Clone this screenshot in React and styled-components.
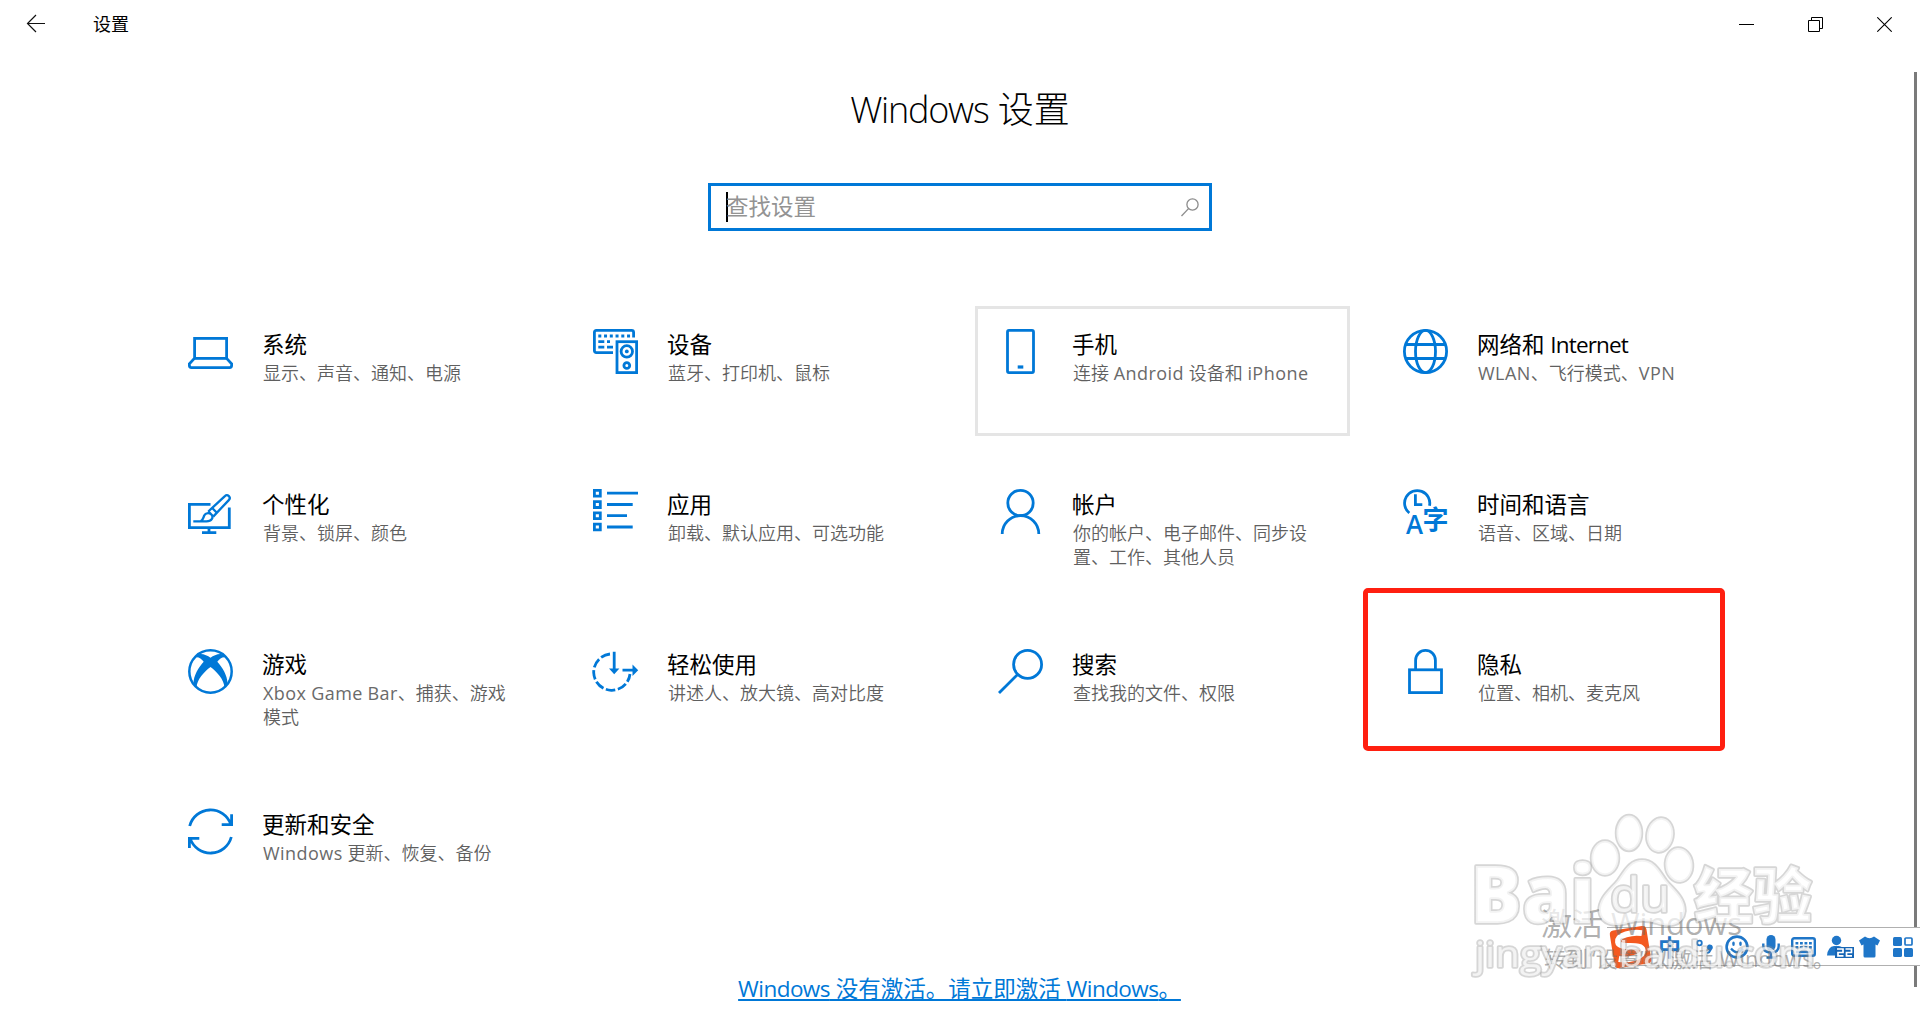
import styled, { createGlobalStyle, css } from 'styled-components';

const latinFont = `'Open Sans', 'Noto Sans'`;
const fontStack = `${latinFont}, 'Noto Sans CJK SC', sans-serif`;
const accent = '#0078d7';
const imeBlue = '#1f76c8';

const IconText = styled.text`
    fill: ${accent};
    stroke: none;
    font-family: ${fontStack};
    font-weight: 600;
`

export default function App() {
    return (
        <>
            <GlobalStyle />
            <Window>
                <TitleBar />
                <Content>
                    <PageTitle><Mixed text='Windows 设置' spacing='-0.034em' /></PageTitle>
                    <SearchBox>
                        <Caret />
                        <Placeholder>查找设置</Placeholder>
                        <SearchIcon />
                    </SearchBox>
                    <Grid>
                        {categories.map(item => <Category key={item.title} {...item} />)}
                    </Grid>
                </Content>
                <ActivateLink href='#'><Mixed text='Windows 没有激活。请立即激活 Windows。' spacing='-0.025em' /></ActivateLink>
                <ScrollBar />
                <ImeBar />
                <ActivateNotice>
                    <h2><Mixed text='激活 Windows' spacing='-0.005em' /></h2>
                    <p><Mixed text='转到“设置”以激活 Windows。' spacing='0' /></p>
                </ActivateNotice>
                <BaiduMark />
            </Window>
        </>
    );
}

// latin words get their own letter spacing, the chinese text keeps its full advance
function Mixed({ text, spacing = '-0.03em' }) {
    return text.split(/([A-Za-z]+)/).map((part, i) => (
        i % 2 ? <Latin key={i} $spacing={spacing}>{part}</Latin> : part
    ));
}

function TitleBar() {
    return (
        <Bar>
            <BackButton type='button'>
                <svg width='20' height='20' viewBox='0 0 20 20' fill='none' stroke='#111' strokeWidth='1.2'>
                    <path d='M19 9.5H1.5M10 1L1.5 9.5L10 18' />
                </svg>
            </BackButton>
            <BarTitle>设置</BarTitle>
            <WindowButton type='button'>
                <svg width='15' height='15' viewBox='0 0 15 15'><path d='M0 7.5H15' stroke='#000' /></svg>
            </WindowButton>
            <WindowButton type='button'>
                <svg width='15' height='15' viewBox='0 0 15 15' fill='none' stroke='#000'>
                    <path d='M0.5 3.5H11.5V14.5H0.5ZM3.5 3.5V0.5H14.5V11.5H11.5' />
                </svg>
            </WindowButton>
            <WindowButton type='button'>
                <svg width='15' height='15' viewBox='0 0 15 15' stroke='#000' strokeWidth='1.1'>
                    <path d='M0.3 0.3L14.7 14.7M14.7 0.3L0.3 14.7' />
                </svg>
            </WindowButton>
        </Bar>
    );
}

function SearchIcon() {
    return (
        <svg width='18' height='19' viewBox='0 0 18 19' fill='none' stroke='#8c8c8c' strokeWidth='1.3'>
            <circle cx='11.5' cy='6.5' r='5.6' />
            <path d='M7.5 10.6L0.5 18' />
        </svg>
    );
}

function Category({ title, text, icon, hovered, marked }) {
    return (
        <Card $hovered={hovered}>
            <CardIcon viewBox='0 0 45 45'>{icon}</CardIcon>
            <CardText>
                <CardTitle><Mixed text={title} spacing='-0.038em' /></CardTitle>
                <CardInfo><Mixed text={text} spacing='0.025em' /></CardInfo>
            </CardText>
            {marked && <RedFrame />}
        </Card>
    );
}

const categories = [
    {
        title: '系统',
        text: '显示、声音、通知、电源',
        icon: (
            <>
                <rect x='6.6' y='9.4' width='32' height='20' />
                <path d='M6.4 29.4L1.4 34.8V36.6Q1.4 38.6 3.4 38.6H41.6Q43.6 38.6 43.6 36.6V34.8L38.6 29.4' />
            </>
        )
    },
    {
        title: '设备',
        text: '蓝牙、打印机、鼠标',
        icon: (
            <>
                <path d='M20 23.6H3.4Q1.4 23.6 1.4 21.6V3.4Q1.4 1.4 3.4 1.4H38.6Q40.6 1.4 40.6 3.4V8.5' />
                <path d='M5.3 7H37.5' strokeDasharray='3 2.75' />
                <path d='M5.3 12.7H11.3M14 12.7H17M5.3 18.2H11.3M14 18.2H20' />
                <rect x='24' y='12.7' width='19.6' height='30.9' />
                <circle cx='33.8' cy='22.4' r='5.7' />
                <circle cx='33.8' cy='22.4' r='1.9' fill={accent} stroke='none' />
                <circle cx='33.8' cy='36.5' r='2.9' />
            </>
        )
    },
    {
        title: '手机',
        text: '连接 Android 设备和 iPhone',
        hovered: true,
        icon: (
            <>
                <rect x='9.5' y='1.4' width='26' height='42.2' rx='1.5' />
                <path d='M19.7 38H25.3' strokeWidth='3.2' />
            </>
        )
    },
    {
        title: '网络和 Internet',
        text: 'WLAN、飞行模式、VPN',
        icon: (
            <>
                <circle cx='22.5' cy='22.5' r='21.1' />
                <ellipse cx='22.5' cy='22.5' rx='10' ry='21.1' />
                <path d='M2.5 15.5H42.5M2.5 29.5H42.5' />
            </>
        )
    },
    {
        title: '个性化',
        text: '背景、锁屏、颜色',
        icon: (
            <>
                <path d='M22.5 15.4H1.4V38.6H41.3V18.5M21 39V43.6M14 43.6H28.3' />
                <g strokeWidth='2.3'>
                    <path d='M20.3 22.5L36.9 7.1A2.75 2.75 0 0 1 40.8 11.1L25.2 27.6' />
                    <path d='M5.3 32.4H18.5C24 32.4 25.2 28.5 24 26.2C22 22.9 17.5 23.6 16.2 26.5C15.2 29 15.6 30.5 12.5 32.4M20.3 22.3L25.3 27.5M24 18.8L28.8 23.8' />
                </g>
            </>
        )
    },
    {
        title: '应用',
        text: '卸载、默认应用、可选功能',
        icon: (
            <>
                <path d='M1.4 1.4h5.9v5.8h-5.9zM1.4 12.7h5.9v5.8h-5.9zM1.4 23.9h5.9v5.8h-5.9zM1.4 35.1h5.9v5.8h-5.9z' />
                <path d='M14 4.2H45M14 15.5H39.7M14 26.7H34M14 38H39.7' />
            </>
        )
    },
    {
        title: '帐户',
        text: '你的帐户、电子邮件、同步设置、工作、其他人员',
        icon: (
            <>
                <circle cx='22.5' cy='14' r='12.7' />
                <path d='M4.2 45A18.3 18.3 0 0 1 40.8 45' />
            </>
        )
    },
    {
        title: '时间和语言',
        text: '语音、区域、日期',
        icon: (
            <>
                <path d='M6.3 24A12.6 12.6 0 1 1 26.5 16.8M12.4 5.3V15.6H19.3' />
                <IconText x='3' y='45' fontSize='27' textLength='17' lengthAdjust='spacingAndGlyphs'>A</IconText>
                <IconText x='19.5' y='40.3' fontSize='26'>字</IconText>
            </>
        )
    },
    {
        title: '游戏',
        text: 'Xbox Game Bar、捕获、游戏模式',
        icon: (
            <>
                <circle cx='22.5' cy='22.5' r='21.2' strokeWidth='2.5' />
                <path
                    fill={accent}
                    stroke='none'
                    d='M9.5 5.5C14 3.8 19 6.2 22.5 8.7C26 6.2 31 3.8 35.5 5.5L37.5 8.5C34.5 7.8 31.5 10 29.3 12.7C34.5 18.5 39.5 26.5 39.5 34.5L36.3 38.3C36.5 31 28.5 22.3 22.5 18C16.5 22.3 8.5 31 8.7 38.3L5.5 34.5C5.5 26.5 10.5 18.5 15.7 12.7C13.5 10 10.5 7.8 7.5 8.5Z'
                />
            </>
        )
    },
    {
        title: '轻松使用',
        text: '讲述人、放大镜、高对比度',
        icon: (
            <>
                <path d='M17 5A18.2 18.2 0 1 0 37 25' strokeDasharray='9.6 2.6' />
                <path d='M21.2 2.7V21M29.5 21.2H41' />
                <path d='M16 19.5H26.4L21.2 25.3ZM39.5 15.5L45.2 21.2L39.5 26.9Z' fill={accent} stroke='none' />
            </>
        )
    },
    {
        title: '搜索',
        text: '查找我的文件、权限',
        icon: (
            <>
                <circle cx='29.6' cy='15.4' r='14' />
                <path d='M19.6 25.4L1 44' />
            </>
        )
    },
    {
        title: '隐私',
        text: '位置、相机、麦克风',
        marked: true,
        icon: (
            <>
                <rect x='6.5' y='20.8' width='32' height='22.8' />
                <path d='M12.6 20V11.3A9.9 9.9 0 0 1 32.4 11.3V20' />
            </>
        )
    },
    {
        title: '更新和安全',
        text: 'Windows 更新、恢复、备份',
        icon: (
            <>
                <path d='M1.7 17A21.5 21.5 0 0 1 42.8 15.4M43.6 5.3V15.6H33.7' />
                <path d='M43.3 28A21.5 21.5 0 0 1 2.2 29.6M1.4 39V29.4H11.3' />
            </>
        )
    }
];

function ImeBar() {
    return (
        <Ime>
            <ImeLogo viewBox='0 0 46 44'>
                <g transform='rotate(-9 23 22)'>
                    <rect x='4' y='3' width='37' height='38' rx='4' fill='#f4591f' />
                    <path d='M36 10C27 7 11 8 11 15C11 23 34 19 34 27C34 34 18 35 9 32' fill='none' stroke='#fff' strokeWidth='6' />
                </g>
            </ImeLogo>
            <ImeMode>中</ImeMode>
            <ImeItem $width={17} $gap={15} viewBox='0 0 17 22'>
                <circle cx='3.5' cy='7' r='2.3' fill='none' stroke={imeBlue} strokeWidth='1.8' />
                <path d='M11 10.5a3 3 0 1 1 4.6 3.4q-1 3.3-4.2 4l-.4-1.6q1.8-.6 2-2a3 3 0 0 1-2-3.8z' />
            </ImeItem>
            <ImeItem $width={24} $gap={12} viewBox='0 0 24 24'>
                <circle cx='12' cy='12' r='10.4' fill='none' stroke={imeBlue} strokeWidth='2.6' />
                <ellipse cx='8.5' cy='8.8' rx='1.3' ry='2.2' />
                <ellipse cx='15.5' cy='8.8' rx='1.3' ry='2.2' />
                <path d='M6 13.5Q12 21 18 13.5' fill='none' stroke={imeBlue} strokeWidth='2.2' />
            </ImeItem>
            <ImeItem $width={18} $gap={13} viewBox='0 0 18 24'>
                <rect x='4.5' y='0' width='9' height='15.5' rx='4.5' />
                <path d='M1.3 8.5V11Q1.3 17.5 9 17.5T16.7 11V8.5M9 17.5V23M4.5 22.5H13.5' fill='none' stroke={imeBlue} strokeWidth='2.4' />
            </ImeItem>
            <ImeItem $width={25} $gap={11} viewBox='0 0 25 20'>
                <rect x='1.2' y='1.2' width='22.6' height='17.6' rx='2' fill='none' stroke={imeBlue} strokeWidth='2.4' />
                <path d='M4.5 6.3H21M4.5 10.3H21' fill='none' stroke={imeBlue} strokeWidth='2.6' strokeDasharray='2.8 1.7' />
                <path d='M5 15H20' stroke={imeBlue} strokeWidth='2.4' />
            </ImeItem>
            <ImeItem $width={27} $gap={11} viewBox='0 0 27 24'>
                <circle cx='9.5' cy='5.5' r='4.7' />
                <path d='M0 20.5Q1 11.5 7 11H12Q17 11.5 18 20.5Z' />
                <rect x='8' y='12' width='19' height='11' fill='#1565b5' />
                <path d='M10 14H16V17.5H11V20.8H16.5M18.5 14H24.5V17.5H19.5V20.8H25' fill='none' stroke='#fff' strokeWidth='1.7' />
            </ImeItem>
            <ImeItem $width={21} $gap={5} viewBox='0 0 21 22'>
                <path d='M6 0.5Q10.5 4 15 0.5L21 4.5L18.5 9.5L16.5 8.5V20Q16.5 21.5 15 21.5H6Q4.5 21.5 4.5 20V8.5L2.5 9.5L0 4.5Z' />
            </ImeItem>
            <ImeItem $width={20} $gap={13} viewBox='0 0 20 20'>
                <rect width='9' height='9' rx='1.5' />
                <rect y='11' width='9' height='9' rx='1.5' />
                <rect x='11' y='11' width='9' height='9' rx='1.5' />
                <rect x='12' y='1' width='7' height='7' rx='1' fill='none' stroke={imeBlue} strokeWidth='1.7' />
            </ImeItem>
        </Ime>
    );
}

function BaiduMark() {
    return (
        <Mark viewBox='0 0 370 190'>
            <MarkText x='-2' y='113' fontSize='80' textLength='125' lengthAdjust='spacingAndGlyphs'>Bai</MarkText>
            <g transform='translate(-2 0)'>
                <ellipse cx='135' cy='48' rx='13.5' ry='17' />
                <ellipse cx='159' cy='23' rx='12.5' ry='17.5' />
                <ellipse cx='190' cy='25' rx='13' ry='17' transform='rotate(10 190 25)' />
                <ellipse cx='209' cy='55' rx='13.5' ry='17' transform='rotate(-5 209 55)' />
                <path d='M172 50C184 50 189 60 196 70C204 80 215 87 215 101C213 118 196 117 186 113C176 110 168 110 158 113C146 117 131 116 129 101C129 87 140 80 148 70C155 60 160 50 172 50Z' />
            </g>
            <MarkText x='138' y='102' fontSize='47' $plain textLength='60' lengthAdjust='spacingAndGlyphs'>du</MarkText>
            <MarkText x='222' y='108' fontSize='60' textLength='118' lengthAdjust='spacingAndGlyphs'>经验</MarkText>
            <MarkText x='3' y='157' fontSize='37' $plain textLength='340' lengthAdjust='spacingAndGlyphs'>jingyan.baidu.com</MarkText>
        </Mark>
    );
}

const GlobalStyle = createGlobalStyle`
    body {
        margin: 0;
        background-color: #ffffff;
        overflow: hidden;
    }
    * {
        box-sizing: border-box;
    }
`

const Window = styled.div`
    display: flex;
    flex-direction: column;
    align-items: center;
    position: relative;
    width: 1920px;
    height: 1020px;
    overflow: hidden;
    color: #000000;
    font-family: ${fontStack};
`
const Latin = styled.span`
    letter-spacing: ${({ $spacing }) => $spacing};
`
const Bar = styled.header`
    display: flex;
    align-items: center;
    width: 100%;
    height: 48px;
    padding: 0 1px 0 26px;
`
const plainButton = css`
    display: flex;
    align-items: center;
    justify-content: center;
    padding: 0;
    border: none;
    background: none;
`
const BackButton = styled.button`
    ${plainButton}
    width: 20px;
    height: 48px;
`
const BarTitle = styled.div`
    flex: 1;
    margin-left: 47px;
    font-size: 18px;
    line-height: 48px;
`
const WindowButton = styled.button`
    ${plainButton}
    width: 69px;
    height: 48px;
    svg {
        display: block;
        margin-top: 1px;
    }
`
const Content = styled.main`
    display: flex;
    flex-direction: column;
    align-items: center;
    width: 100%;
    flex: 1;
`
const PageTitle = styled.h1`
    margin: 37px 0 0;
    font-size: 36px;
    font-weight: 300;
    line-height: 50px;
`
const SearchBox = styled.div`
    display: flex;
    align-items: center;
    width: 504px;
    height: 48px;
    margin-top: 48px;
    padding: 0 10px 0 15px;
    border: 3px solid ${accent};
`
const Caret = styled.span`
    width: 2px;
    height: 30px;
    background-color: #000000;
`
const Placeholder = styled.span`
    flex: 1;
    margin-left: -2px;
    color: #939393;
    font-size: 22.5px;
    line-height: 42px;
`
const Grid = styled.section`
    display: grid;
    grid-template-columns: repeat(4, 375px);
    grid-auto-rows: 130px;
    gap: 30px;
    margin-top: 75px;
    width: 1590px;
`
const Card = styled.article`
    display: flex;
    gap: 29px;
    position: relative;
    padding: 20px 30px 0 20px;
    border: 3px solid ${({ $hovered }) => ($hovered ? '#e5e5e5' : 'transparent')};
`
const CardIcon = styled.svg`
    flex: none;
    width: 45px;
    height: 45px;
    overflow: visible;
    fill: none;
    stroke: ${accent};
    stroke-width: 2.8px;
`
const CardText = styled.div`
    flex: 1;
`
const CardTitle = styled.h2`
    margin: 0;
    font-size: 22.5px;
    font-weight: 400;
    line-height: 32px;
`
const CardInfo = styled.p`
    margin: 0 0 0 1px;
    color: #5f5f5f;
    font-size: 18px;
    font-weight: 350;
    line-height: 24px;
    ${Latin} {
        color: #6a6a6a;
        font-weight: 400;
    }
`
// frame drawn by hand around the card, wider than the card's own box
const RedFrame = styled.div`
    position: absolute;
    top: -41px;
    left: -20px;
    width: 362px;
    height: 163px;
    border: 5px solid #ff1f10;
    border-radius: 5px;
`
const ActivateLink = styled.a`
    margin: 0 1px 14px 0;
    color: ${accent};
    font-size: 22.5px;
    line-height: 34px;
    text-decoration: underline;
    text-decoration-thickness: 1.5px;
    text-underline-offset: 2px;
`
const ScrollBar = styled.div`
    position: absolute;
    top: 72px;
    right: 3px;
    width: 3px;
    height: 915px;
    background-color: #7a7a7a;
`
const Ime = styled.div`
    display: flex;
    align-items: center;
    position: absolute;
    top: 927px;
    right: 0;
    width: 313px;
    height: 39px;
    border: 1px solid #b0b0b0;
    border-width: 1px 0;
    background-color: #ffffff;
`
const ImeLogo = styled.svg`
    flex: none;
    width: 46px;
    height: 44px;
    margin-left: 1px;
`
const ImeMode = styled.span`
    margin-left: 4px;
    color: ${imeBlue};
    font-size: 23px;
    font-weight: 700;
    line-height: 36px;
`
const ImeItem = styled.svg`
    flex: none;
    width: ${({ $width }) => $width}px;
    margin-left: ${({ $gap }) => $gap}px;
    fill: ${imeBlue};
`
const ActivateNotice = styled.div`
    position: absolute;
    top: 901px;
    left: 1541px;
    color: rgba(110, 110, 110, 0.55);
    white-space: nowrap;
    h2 {
        margin: 0;
        font-size: 31px;
        font-weight: 400;
        line-height: 44px;
    }
    p {
        margin: 0 0 0 3px;
        font-size: 22px;
        line-height: 26px;
    }
`
const Mark = styled.svg`
    position: absolute;
    top: 810px;
    left: 1472px;
    width: 370px;
    height: 190px;
    overflow: visible;
    fill: rgba(255, 255, 255, 0.7);
    stroke: rgba(140, 140, 140, 0.36);
    stroke-width: 3.5px;
    stroke-linejoin: round;
    paint-order: stroke;
    filter: blur(0.6px);
`
const MarkText = styled.text`
    font-family: ${fontStack};
    font-weight: ${({ $plain }) => ($plain ? 500 : 800)};
`
